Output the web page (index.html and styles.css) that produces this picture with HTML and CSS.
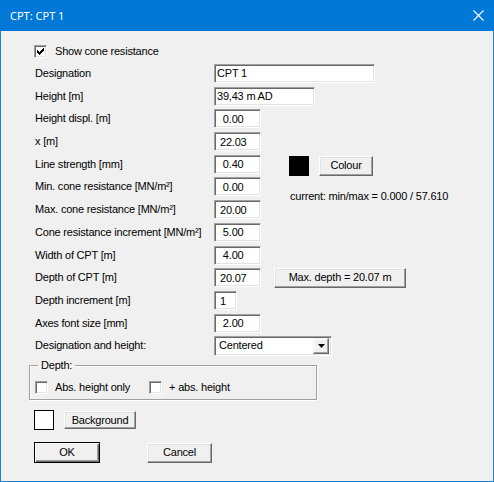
FILE: index.html
```html
<!DOCTYPE html>
<html lang="en">
<head>
    <meta charset="UTF-8">
    <title>CPT: CPT 1</title>
    <link rel="stylesheet" href="styles.css">
</head>
<body>
  <div class="window">
    <div class="titlebar">
      <span class="title">CPT: CPT 1</span>
      <svg class="close" width="11" height="11" viewBox="0 0 11 11">
        <path d="M0.5 0.5L10.5 10.5M10.5 0.5L0.5 10.5" stroke="#fff" stroke-width="1.1" fill="none"/>
      </svg>
    </div>

    <div class="content">
      <label class="check first">
        <span class="box">
          <svg width="7" height="7" viewBox="0 0 7 7"><path d="M6 0h1v1h-1z M5 1h2v1h-2z M0 2h1v1h-1z M4 2h3v1h-3z M0 3h2v1h-2z M3 3h3v1h-3z M0 4h5v1h-5z M1 5h3v1h-3z M2 6h1v1h-1z" fill="#000"/></svg>
        </span>
        Show cone resistance
      </label>

      <div class="form">
        <span class="lbl">Designation</span>
        <input class="txt wide" value="CPT 1">

        <span class="lbl">Height [m]</span>
        <input class="txt mid" value="39,43 m AD">

        <span class="lbl">Height displ. [m]</span>
        <input class="txt num" value=" 0.00">

        <span class="lbl">x [m]</span>
        <input class="txt num" value="22.03">

        <span class="lbl">Line strength [mm]</span>
        <input class="txt num" value=" 0.40">
        <div class="colour">
          <span class="swatch black"></span>
          <button class="btn colour-btn">Colour</button>
        </div>

        <span class="lbl">Min. cone resistance [MN/m²]</span>
        <input class="txt num" value=" 0.00">
        <span class="current">current: min/max = 0.000 / 57.610</span>

        <span class="lbl">Max. cone resistance [MN/m²]</span>
        <input class="txt num" value="20.00">

        <span class="lbl">Cone resistance increment [MN/m²]</span>
        <input class="txt num" value=" 5.00">

        <span class="lbl">Width of CPT [m]</span>
        <input class="txt num" value=" 4.00">

        <span class="lbl">Depth of CPT [m]</span>
        <input class="txt num" value="20.07">
        <button class="btn depth-btn">Max. depth = 20.07 m</button>

        <span class="lbl">Depth increment [m]</span>
        <input class="txt num tiny" value="1">

        <span class="lbl">Axes font size [mm]</span>
        <input class="txt num" value=" 2.00">

        <span class="lbl">Designation and height:</span>
        <div class="combo">
          <span class="combo-text">Centered</span>
          <span class="combo-btn">
            <svg width="7" height="4" viewBox="0 0 7 4"><path d="M0 0h7L3.5 4z" fill="#000"/></svg>
          </span>
        </div>
      </div>

      <fieldset class="group">
        <legend>Depth:</legend>
        <div class="group-row">
          <label class="check"><span class="box"></span>Abs. height only</label>
          <label class="check second"><span class="box"></span>+ abs. height</label>
        </div>
      </fieldset>

      <div class="bg-row">
        <span class="swatch white"></span>
        <button class="btn bg-btn">Background</button>
      </div>

      <div class="actions">
        <button class="btn default ok">OK</button>
        <button class="btn cancel">Cancel</button>
      </div>
    </div>
  </div>
</body>
</html>
```

FILE: styles.css
```css
* {
    box-sizing: border-box;
}
body {
    margin: 0;
    font-family: "Liberation Sans", Arial, sans-serif;
    font-size: 11px;
    letter-spacing: -0.2px;
    line-height: 13px;
    color: #000;
    background: #fff;
}
.window {
    width: 494px;
    height: 482px;
    background: #f0f0f0;
    border: 1px solid #1883d7;
    border-top: none;
}
.titlebar {
    height: 31px;
    margin: 0 -1px;
    padding: 0 10px;
    display: flex;
    align-items: center;
    justify-content: space-between;
    background: #0078d7;
    color: #fff;
}
.title {
    font-family: "Noto Sans", sans-serif;
    font-size: 11px;
    letter-spacing: 0;
}
.content {
    padding: 14px 0 0 33px;
}
.check {
    display: flex;
    align-items: center;
    height: 13px;
}
.box {
    width: 13px;
    height: 13px;
    margin-right: 7px;
    display: flex;
    align-items: center;
    justify-content: center;
    background: #fff;
    border: 1px solid;
    border-color: #a0a0a0 #fff #fff #a0a0a0;
    box-shadow: inset 1px 1px #696969, inset -1px -1px #e3e3e3;
}
.check.first .box {
    margin-right: 8px;
}
.form {
    display: grid;
    grid-template-columns: 179px 60px 1fr;
    grid-auto-rows: 22.73px;
    align-items: center;
    margin: 4px 0 0 1px;
}
.lbl {
    grid-column: 1;
}
.txt {
    grid-column: 2;
    height: 19px;
    width: 47px;
    padding: 0 0 0 5px;
    font: inherit;
    letter-spacing: inherit;
    color: #000;
    background: #fff;
    border: 1px solid;
    border-color: #a0a0a0 #fff #fff #a0a0a0;
    box-shadow: inset 1px 1px #696969, inset -1px -1px #e3e3e3;
    outline: none;
}
.txt.wide {
    grid-column: 2 / 4;
    width: 161px;
    padding-left: 2px;
}
.txt.mid {
    grid-column: 2 / 4;
    width: 101px;
    padding-left: 2px;
}
.txt.tiny {
    width: 23px;
}
.btn {
    height: 20px;
    padding: 0;
    font: inherit;
    letter-spacing: inherit;
    color: #000;
    background: #f0f0f0;
    border: 1px solid;
    border-color: #fff #696969 #696969 #fff;
    box-shadow: inset -1px -1px #a0a0a0, inset 1px 1px #e3e3e3;
}
.colour {
    grid-column: 3;
    display: flex;
    align-items: center;
    gap: 10px;
    margin: 3px 0 0 15px;
}
.swatch {
    width: 20px;
    height: 20px;
    border: 1px solid #000;
}
.swatch.black {
    background: #000;
}
.swatch.white {
    background: #fff;
}
.colour-btn {
    width: 54px;
}
.current {
    grid-column: 3;
    align-self: start;
    margin: 14px 0 0 16px;
    white-space: nowrap;
}
.depth-btn {
    grid-column: 3;
    justify-self: start;
    width: 132px;
}
.combo {
    grid-column: 2 / 4;
    width: 118px;
    height: 20px;
    display: flex;
    align-items: center;
    padding: 2px;
    background: #fff;
    border: 1px solid;
    border-color: #a0a0a0 #fff #fff #a0a0a0;
    box-shadow: inset 1px 1px #696969, inset -1px -1px #e3e3e3;
}
.combo-text {
    flex: 1;
    padding-left: 2px;
}
.combo-btn {
    width: 16px;
    height: 16px;
    display: flex;
    align-items: center;
    justify-content: center;
    background: #f0f0f0;
    border: 1px solid;
    border-color: #f0f0f0 #696969 #696969 #f0f0f0;
    box-shadow: inset -1px -1px #a0a0a0, inset 1px 1px #fff;
}
.group {
    width: 288px;
    margin: 2px 0 0 -5px;
    padding: 9px 5px 5px;
    border: 1px solid #a0a0a0;
    box-shadow: 1px 1px 0 #fff, inset 1px 1px 0 #fff;
}
.group legend {
    margin-left: 3px;
    padding: 0 3px;
    line-height: 13px;
}
.group-row {
    display: flex;
    align-items: center;
}
.check.second {
    margin-left: 19px;
}
.bg-row {
    display: flex;
    align-items: center;
    gap: 10px;
    margin-top: 10px;
}
.bg-btn {
    width: 72px;
    height: 18px;
}
.actions {
    display: flex;
    align-items: center;
    margin-top: 12px;
}
.ok {
    width: 66px;
    height: 21px;
}
.btn.default {
    border: 1px solid #000;
    box-shadow: inset 1px 1px #fff, inset -1px -1px #696969, inset -2px -2px #a0a0a0;
}
.cancel {
    width: 65px;
    height: 20px;
    margin-left: 47px;
}
```
